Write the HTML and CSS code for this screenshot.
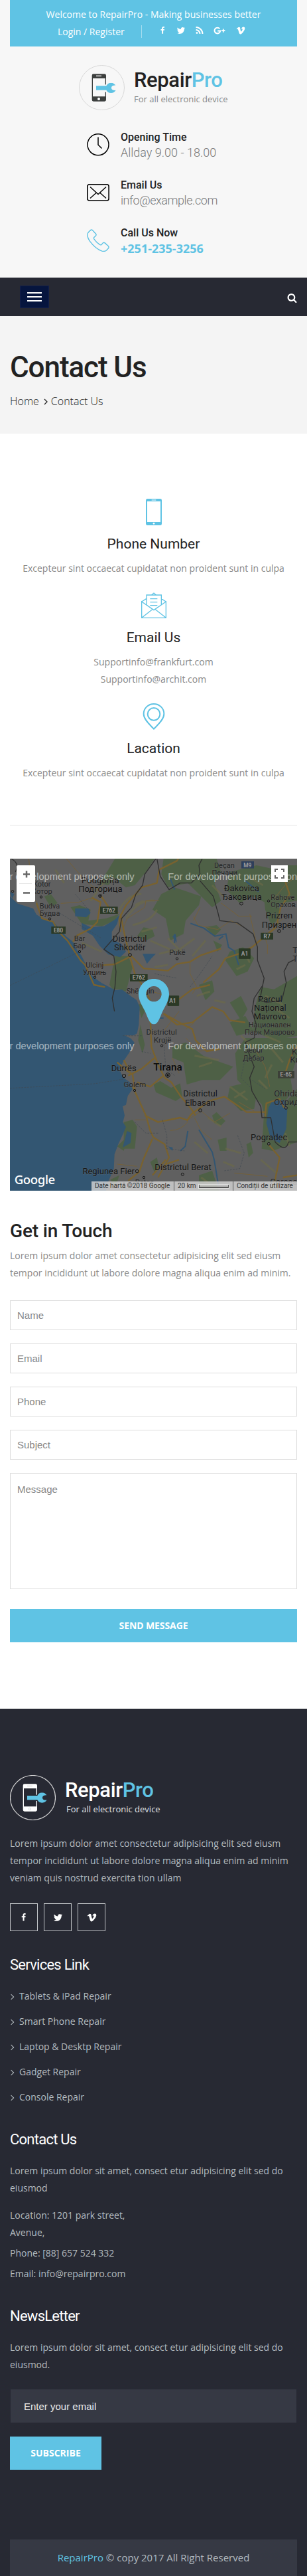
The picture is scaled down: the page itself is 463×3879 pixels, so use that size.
FILE: index.html
```html
<!DOCTYPE html>
<html lang="en">
<head>
<meta charset="utf-8">
<title>RepairPro - Contact Us</title>
<link rel="stylesheet" href="styles.css">
</head>
<body>
<svg class="defs" width="0" height="0" aria-hidden="true">
  <symbol id="fb" viewBox="0 0 1792 1792"><path transform="translate(200 0)" d="M959 140v218h-130q-71 0-96 30t-25 90v156h243l-32 245h-211v629h-254v-629h-212v-245h212v-181q0-155 86-240t231-85q122 0 188 12z"/></symbol>
  <symbol id="tw" viewBox="0 0 1792 1792"><path d="M1684 408q-67 98-162 167 1 14 1 42 0 130-38 259.500t-115.500 248.500-184.500 210.500-258 146-323 54.500q-271 0-496-145 35 4 78 4 225 0 401-138-105-2-188-64.500t-114-159.500q33 5 61 5 43 0 85-11-112-23-185.500-111.500t-73.500-205.500v-4q68 38 146 41-66-44-105-115t-39-154q0-88 44-163 121 149 294.500 238.500t371.500 99.500q-8-38-8-74 0-134 94.500-228.500t228.500-94.500q140 0 236 102 109-21 205-78-37 115-142 178 93-10 186-50z"/></symbol>
  <symbol id="rss" viewBox="0 0 1792 1792"><path d="M576 1344q0 80-56 136t-136 56-136-56-56-136 56-136 136-56 136 56 56 136zm512 123q2 28-17 48-18 21-47 21h-135q-25 0-43-16.500t-20-41.500q-22-229-184.500-391.500t-391.500-184.500q-25-2-41.500-20t-16.500-43v-135q0-29 21-47 17-17 43-17h5q160 13 306 80.500t259 181.500q114 113 181.500 259t80.500 306zm512 2q2 27-18 47-18 20-46 20h-143q-26 0-44.500-17.500t-19.500-42.500q-12-215-101-408.500t-231.500-336-336-231.500-408.500-102q-25-1-42.500-19.500t-17.500-43.500v-143q0-28 20-46 18-18 44-18h3q262 13 501.500 120t425.500 294q187 186 294 425.500t120 501.500z"/></symbol>
  <symbol id="gp" viewBox="0 0 18 14"><path d="M9.300 4.300A4.350 4.350 0 1 0 10.200 7.600H6.200" fill="none" stroke="currentColor" stroke-width="2"/><path d="M13.900 4.600h1.700v1.700h1.800V8h-1.800v1.800h-1.700V8h-1.800V6.300h1.800z"/></symbol>
  <symbol id="vm" viewBox="0 0 1792 1792"><path d="M1709 518q-10 236-332 651-333 431-562 431-142 0-240-263-44-160-132-482-72-262-157-262-18 0-127 76l-77-98q24-21 108-96.500t130-115.500q156-138 241-146 95-9 153 55.500t81 203.500q44 287 66 373 55 249 120 249 51 0 154-161 101-161 109-246 13-139-109-139-57 0-121 26 120-393 459-382 251 8 236 326z"/></symbol>
  <symbol id="search" viewBox="0 0 1792 1792"><path d="M1216 832q0-185-131.500-316.500t-316.500-131.500-316.500 131.500-131.500 316.500 131.500 316.500 316.500 131.500 316.500-131.500 131.500-316.500zm512 832q0 52-38 90t-90 38q-54 0-90-38l-343-342q-179 124-399 124-143 0-273.500-55.500t-225-150-150-225-55.500-273.500 55.500-273.500 150-225 225-150 273.500-55.500 273.500 55.500 225 150 150 225 55.500 273.500q0 220-124 399l343 343q37 37 37 90z"/></symbol>
  <symbol id="wrench" viewBox="0 0 90 48"><path d="M0 14h46C50 5 57 0 67 0c10 0 18 5 21 12-4-1-10 0-14 2-4 3-5 6-5 9s1 6 5 9c5 2 11 2 15 1-4 8-12 13-22 13s-17-5-21-13H0z"/></symbol>
</svg>

<header class="header">
  <div class="topbar">
    <p class="welcome">Welcome to RepairPro - Making businesses better</p>
    <div class="topbar-row">
      <a class="login">Login / Register</a>
      <nav class="top-social">
        <svg class="t-fb"><use href="#fb"/></svg>
        <svg><use href="#tw"/></svg>
        <svg><use href="#rss"/></svg>
        <svg class="t-gp"><use href="#gp"/></svg>
        <svg><use href="#vm"/></svg>
      </nav>
    </div>
  </div>
  <a class="logo">
    <svg class="logo-mark" viewBox="0 0 207 204">
      <ellipse cx="103.500" cy="102" rx="102" ry="100.500" fill="none" stroke="#d8d8d8" stroke-width="3"/>
      <path fill="#3c3f3e" fill-rule="evenodd" d="M66 40h50q7 0 7 7v110q0 7-7 7H66q-7 0-7-7V47q0-7 7-7zM63 60v82h56V60z"/>
      <path d="M78 49h24" stroke="#fff" stroke-width="4"/><circle cx="90" cy="153" r="6" fill="#fff"/>
      <path d="M76 88h50v34H76z" fill="#f7f7f7"/>
      <use href="#wrench" x="78" y="80" width="90" height="48" fill="#5fc3e4"/>
    </svg>
    <span class="logo-text"><span class="brand">Repair<em>Pro</em></span><span class="tagline">For all electronic device</span></span>
  </a>
  <ul class="info">
    <li><svg viewBox="0 0 34 34"><circle cx="17" cy="16.800" r="16" fill="none" stroke="#000" stroke-width="1.500"/><path d="M17 5.500v11.500l5.500 5.500" fill="none" stroke="#000" stroke-width="1.500"/></svg>
      <div><h3>Opening Time</h3><p>Allday 9.00 - 18.00</p></div></li>
    <li><svg viewBox="0 0 34 34"><rect x=".9" y="4.800" width="32.200" height="24.200" rx="3" fill="none" stroke="#000" stroke-width="1.600"/><path d="M5 8.500 17 19.500 29 8.500M5 25.500l9-8M29 25.500l-9-8" fill="none" stroke="#000" stroke-width="1.400"/></svg>
      <div><h3>Email Us</h3><p class="mail">info@example.com</p></div></li>
    <li><svg viewBox="0 0 34 34"><path d="M2.500 4.500 5.800 1.400q1.300-1 2.600.2l5.200 5.600q1 1.400-.2 2.800l-2.600 2.500q-.8 1 0 2.300 3.800 5.600 8.600 8.600 1.500.8 2.600 0l2.200-2.500q1.500-1.200 3 0l5.100 4.700q1.400 1.500.2 3.200l-3 3.200q-2.600 2.100-6.600 1.100Q13.500 30.200 4.600 18.400 1 13.100.8 8.900.7 6.600 2.500 4.500z" fill="none" stroke="#5fc3e4" stroke-width="1.400"/></svg>
      <div><h3>Call Us Now</h3><p class="tel">+251-235-3256</p></div></li>
  </ul>
</header>

<nav class="navbar">
  <button class="toggle" aria-label="Menu"><i></i><i></i><i></i></button>
  <svg class="search"><use href="#search"/></svg>
</nav>

<section class="title-band">
  <h1>Contact Us</h1>
  <p class="crumbs"><a>Home</a><svg viewBox="0 0 6 10"><path d="m1 1 4 4-4 4" fill="none" stroke="#222" stroke-width="1.300"/></svg><span>Contact Us</span></p>
</section>

<main class="main">
  <section class="contacts">
    <article>
      <svg viewBox="0 0 114 120"><path fill="#5fc3e4" fill-rule="evenodd" d="M28 0h58q7 0 7 7v106q0 7-7 7H28q-7 0-7-7V7q0-7 7-7zm-1 12v93h60V12z"/><path d="M47 6h20" stroke="#fff" stroke-width="3"/><circle cx="57" cy="112" r="4" fill="#fff"/></svg>
      <h3>Phone Number</h3>
      <p>Excepteur sint occaecat cupidatat non proident sunt in culpa</p>
    </article>
    <article>
      <svg viewBox="0 0 114 120"><g fill="none" stroke="#5fc3e4" stroke-width="4"><path d="M2 42v73h110V42L57 80zM2 115l50-39M112 115 62 76M2 42l22-14M112 42 90 28M24 56V12h67v44M47 11l10-8 10 8M40 29h33M40 44h33M40 59h33"/></g></svg>
      <h3>Email Us</h3>
      <p>Supportinfo@frankfurt.com<br>Supportinfo@archit.com</p>
    </article>
    <article>
      <svg viewBox="0 0 114 120"><g fill="none" stroke="#5fc3e4" stroke-width="6"><path d="M57 116C43 101 11 75 11 48 11 21 33 3 57 3s46 18 46 45c0 27-32 53-46 68z"/><circle cx="57" cy="49" r="28"/></g></svg>
      <h3>Lacation</h3>
      <p>Excepteur sint occaecat cupidatat non proident sunt in culpa</p>
    </article>
  </section>

  <section class="map">
    <svg class="map-art" viewBox="45 0 1299 1500" preserveAspectRatio="none">
      <rect x="45" width="1299" height="1500" fill="#606060"/>
      <g class="green">
        <path d="M520 0h180l-40 60-50 60-40 10-50-40-30 30-40-10 40-60zM740 0h240l20 60-30 50 30 80-40 30-60-60-50-50-90 20-30-60zM730 160l60-30 60 20 60 20-10 40-60 70-10 60-60 30-20-100-60-40zM1040 60l120-30 184 40v120l-120 20-80-40-60 30-60-60zM1250 30h94v120l-60 20z"/>
        <path d="M930 310l50-10 20 20-30 30zM620 350l30-40 40 10 10 30-40 20zM320 220l40-10 50 20-10 50 80-10 60-20-20 30-60 25-90-10zM200 170l30-10 30 40-30 20zM1040 420l60-20 50 50-30 60-50 20-50-70zM1190 130l60 30 20 90-40 60-30-80zM965 370l40 20-20 30z"/>
        <path d="M520 440h60l20 50-30 110-30-10-30 0-15-20zM900 570l60-20 10 50-40 40zM1180 580l60 10 104-60v270l-100 20-100-40 10-110zM1040 650l50-30 30 60-30 50zM1040 740l70-30 40 70-80 20zM625 660l25-10 10 30-20 40z"/>
        <path d="M1110 810h234v90l-30 90 10 60-60 80-60 60-20-80-60-60-50-50-10-120zM780 850l60-20 80 60 50 20 85 30-60 60-80 0-70 20-15-100-50-20zM1310 1080l34-40v240l-110 40-50-10 10-150 60-10zM695 1020l30-15 50 30 40-20 10 60-30 20-90-40zM1040 1030l80-20 40 60-10 60-60 10-60-60zM960 1160l20-15 40 40-20 20-30-10zM985 1270l40-10v60l-30 0zM1115 1290l20-10 10 50-20 20zM560 1190l40-10 20 30-10 100h-50zM530 1300l50-50-20 70zM680 1370l30-20 10 50-20 20zM900 1430l60-20 30 90h-90zM635 750l20 90-10 40-20-60zM500 1450l40-20-20 60z"/>
      </g>
      <g class="olive">
        <path d="M540 230q40-70 100-70M570 270q60-90 130-80M610 210l40-20M600 300q90-20 110-70M640 330l70-20M680 370l90 40M760 360l60 60M720 430l80-20M800 420l80-60M870 440l60-70M410 190l30-40M430 150l60-60M250 50l40 60M370 380l90 40M700 490l60-10M960 120l50 50M1120 80l70 40M890 620l60-20M970 640l50 10M1070 500l40-20M1110 430l20 40"/>
        <path d="M880 890l110 20M900 940l60-20M1040 1030l80 60M1060 1080l50-30M1090 800l60 60M1200 800l70 30M1230 860l50 60M1230 930l-30 60M1290 1240l20 60M940 1170l60 40M910 1440l40 30M1020 1310l70 20M1010 1370l50 20M880 1280l60 50M1170 1000l40 40M1180 1360l70 60M1250 680l60 40M1200 620l80 40"/>
      </g>
      <path class="sea" d="M45 170 80 203 150 225 165 253 215 283 242 285 270 318 300 352 330 376 350 415 368 437 388 476 398 510 430 540 460 562 500 583 522 594 552 591 592 621 618 638 632 670 628 750 620 790 605 798 562 797 592 812 608 830 585 876 562 910 540 952 556 988 590 1012 600 1040 578 1072 570 1112 555 1118 564 1160 556 1190 570 1212 553 1252 535 1290 518 1336 515 1400 498 1440 484 1471 480 1500H45z"/>
      <g class="sea"><path d="M370 290l40 20 60-5 50-30 20-20-10 40-24 35 0 35 44 20 20 35-26 25-54-12-40-40-30-45-50-30zM1235 1090l50 0 15 40-5 90-30 65-40-20-20-70 10-70zM575 1230l20 10-5 45-35 20zM340 225l60 0 10 20-20 20-50-5zM780 350l15-10 5 40zM645 430l60 0-20 20-20 25zM760 1300l22 5-2 15zM45 150l20 10-10 20z"/></g>
      <g class="river"><path d="M862 292l60 22 50 36 50-10 12 60 30 20M790 340v40M1010 350l-20 15M850 1230l-12 70-22 20M900 1225l60 100 10 40 18 110M770 90l20 50M690 720l50 0M1110 100l60 50M1060 420l20 60"/></g>
      <g class="road-thin">
        <path d="M130 0l10 90-30 50 60 60M300 0l60 70 50 50 50 30M275 202l80-5 60-20M555 320l20-50 80-50 5-30 60 0M875 260l20 40 90 20 60-40 60 30M905 220l-30 60M1000 200l80 60 60 0M1190 330l20 60 0 40M1240 180l50-60 50-40M860 460l0 60 30 60-20 30M690 600l60 20M1130 250l30 130 70-60 50-50"/>
        <path d="M850 1180l60-40 60 50 70-40M530 1380l90 10M610 1180l50 0M880 1170l30 60 50 40M1080 1100l70 40M1060 1420l150 15M1160 870l40 70 20 90M780 900l30 70M840 810l60 60 90-10M840 770l40-30M770 1228q50 0 80-40M740 780l70-90"/>
      </g>
      <g class="road">
        <path d="M165 200l25 70 50 15 25 45 40 40 60 90 20 20 40 90 50 10M330 376l20-30 60-30 30-30 15-90-40-20M455 165l40 60 40 20M545 330l-5-60 30-60 70-80 70-20 10-60 80-40 20-30M545 250l20 100 20 80M590 436l60 60 110 10 40-30 60-10 50-30 90-30M590 450l20 70 40 60 30 60M460 482l60-5 70-35M920 560l70-60 30-50 60-20 60-30 60-50 50-40 20-90 40-60-20-60-20-30M810 635l60-45 80-20M740 700l60 50 70-10 90-70 50 20 30 40 70 10"/>
        <path d="M740 700l90 50 40 20 15 50 50 50 60-10M680 720l5 130 30 80 30 60 30 20 40 60 50 60 20 30M530 920l40 35 30 20 10 70M560 910l30 60M580 980l60-30 60-50M620 1010l60 20 60-50M600 1030l60 130 20 70 15 30 50 30 20 60-50 90M655 1160l60 30 100-20 30 10M845 1185l20-30 80-60 70-20 60 40 40 30 90 0M1200 1165l5-60 60-20 20 40M1290 970l20-60 30-60M1215 1290l50 60-20 100-20 50M690 1265l-40 90-20 60-50 40M750 1380l60-20M1280 1440l64-10M690 1430l60-70"/>
      </g>
      <g class="dash"><path d="M45 573 370 415M45 1037l380-20 140-22M555 800l90 0M740 810l10 140 40 30M610 1190l50 50 60 0M735 1180l20 70 0 60 80 10M1075 1250l30 80-20 70-70 10M1140 1000l60 40M1110 900l-20 90 50 50M860 580l60-80 40-60M260 240l100 60 100 60M340 160l60 70M640 870l40 10M700 520l100 20"/></g>
      <g class="border"><path d="M50 0q40 20 20 60M705 0l-50 70-10 50-30 40-20 60-45 50-10 60-70 80 45 30 10 70-5 70-12 50 10 60M710 0l15 80 40 60 50-30 50 0 40-40-5-40 15-30M905 100l60 70 20 70 10 40 80 10 70 50 20 60 0 60 30 80-20 100 30 10 70-10 20-80-10-50 20-40 30-15M1190 570l-40 60-10 60 20 60-10 60-40 20 20 60 20 50-20 50 10 60 40 70 5 50h40l20 110q50 50 60 0l40 0"/></g>
      <g class="shield"><path d="M453 217h80v32h-80zM232 307h65v32h-65zM588 522h80v32h-80zM1180 335h56v30h-56z"/><path class="blue" d="M1092 12h57v32h-57z"/><path class="blue-g" d="M1082 407h50v44h-50zM759 620h50v44h-50z"/><path class="grey" d="M1257 960h75v32h-75z"/></g>
      <g class="shield-t"><text x="493" y="242">E762</text><text x="264" y="332">E80</text><text x="628" y="547">E762</text><text x="1208" y="360">R7</text><text x="1120" y="38">M9</text><text x="1107" y="439">A1</text><text x="781" y="652">A1</text><text x="1294" y="984">E-65</text></g>
      <g class="dots"><circle cx="453" cy="168" r="7"/><circle cx="1092" cy="203" r="7"/><circle cx="1215" cy="191" r="5"/><circle cx="225" cy="272" r="5"/><circle cx="1263" cy="327" r="7"/><circle cx="360" cy="420" r="5"/><circle cx="588" cy="435" r="7"/><circle cx="801" cy="452" r="5"/><circle cx="429" cy="536" r="5"/><circle cx="186" cy="173" r="5"/><circle cx="57" cy="148" r="5"/><circle cx="732" cy="845" r="5"/><circle cx="561" cy="981" r="8"/><circle cx="759" cy="978" r="10"/><circle cx="609" cy="1047" r="5"/><circle cx="906" cy="1137" r="7"/><circle cx="1294" cy="1126" r="6"/><circle cx="1216" cy="1288" r="6"/><circle cx="620" cy="1412" r="7"/><circle cx="826" cy="1426" r="6"/><circle cx="651" cy="1440" r="5"/></g>
      <circle cx="759" cy="978" r="5"/><circle cx="453" cy="168" r="3"/>
      <g class="place big">
        <text x="454" y="112">Podgorița</text><text x="454" y="151">Подгорица</text><text x="1093" y="146">Đakovica</text><text x="1093" y="185">Ђаковица</text><text x="1263" y="269">Prizren</text><text x="1263" y="311">Призрен</text><text x="587" y="376">Districtul</text><text x="587" y="415">Shkodër</text><text x="560" y="961">Durrës</text><text x="906" y="1075">Districtul</text><text x="906" y="1117">Elbasan</text><text x="491" y="1425">Regiunea Fier</text><text x="828" y="1408">Districtul Berat</text><text x="1217" y="1271">Pogradec</text><text x="1222" y="649">Parcul</text><text x="1222" y="688">Național</text><text x="1222" y="727">Mavrovo</text>
      </g>
      <text class="place tirana" x="759" y="956">Tirana</text>
      <g class="place">
        <text x="1015" y="41">Deçan</text><text x="1016" y="74">Печани</text><text x="190" y="125">Kotor</text><text x="190" y="158">Котор</text><text x="225" y="225">Budva</text><text x="225" y="258">Будва</text><text x="360" y="371">Bar</text><text x="360" y="404">Бар</text><text x="428" y="491">Ulcinj</text><text x="428" y="524">Улцињ</text><text x="802" y="436">Pukë</text><text x="635" y="608">Shëngjin</text><text x="731" y="794" class="md">Districtul</text><text x="735" y="830" class="md">Krujë</text><text x="1220" y="761">Национален</text><text x="1220" y="794">Парк Маврово</text><text x="1147" y="875">Debar</text><text x="1147" y="911">Дебар</text><text x="610" y="1033" class="md">Golem</text><text x="654" y="1474">Patos</text>
      </g>
      <g class="place left"><text x="1225" y="186">Rahove</text><text x="1225" y="220">Орахов</text><text x="1240" y="1074" class="lg">Ohrida</text><text x="1240" y="1112" class="lg">Охрид</text><text x="1320" y="884" class="lg">K</text><text x="1312" y="922" class="lg">Ки</text><text x="1324" y="426" class="lg">T</text><text x="1324" y="465" class="lg">Т</text><text x="1222" y="1474" class="lg">Corcea</text></g>
      <g class="notice"><text x="-8" y="95">For development purposes only</text><text x="760" y="95">For development purposes only</text><text x="-8" y="862">For development purposes only</text><text x="760" y="862">For development purposes only</text></g>
      <path fill="#5fc3e4" fill-rule="evenodd" d="M696 543c38 0 69 30 69 68 0 28-14 48-28 76-13 26-20 61-41 61s-28-35-41-61c-14-28-28-48-28-76 0-38 31-68 69-68zm0 33a35 35 0 1 0 0 70 35 35 0 0 0 0-70z"/>
      <text class="google" x="65" y="1471" textLength="185">Google</text>
    </svg>
    <div class="zoomer"><svg viewBox="0 0 28 55"><path d="M10 13.500h10M15 8.500v10M10 41.500h10" stroke="#666" stroke-width="2.500"/><path d="M4 27.500h19" stroke="#e6e6e6"/></svg></div>
    <div class="full"><svg viewBox="0 0 25 25"><path d="M6 10V6h4M15 6h4v4M19 15v4h-4M10 19H6v-4" fill="none" stroke="#666" stroke-width="2"/></svg></div>
    <div class="attrib"><span class="a1">Date hartă ©2018 Google</span><span class="a2">20 km<i></i></span><span class="a3">Condiții de utilizare</span></div>
  </section>

  <section class="touch">
    <h2>Get in Touch</h2>
    <p>Lorem ipsum dolor amet consectetur adipisicing elit sed eiusm tempor incididunt ut labore dolore magna aliqua enim ad minim.</p>
    <form class="form">
      <input placeholder="Name"><input placeholder="Email"><input placeholder="Phone"><input placeholder="Subject">
      <textarea placeholder="Message"></textarea>
      <button type="button" class="btn send">SEND MESSAGE</button>
    </form>
  </section>
</main>

<footer class="footer">
  <a class="logo logo-light">
    <svg class="logo-mark" viewBox="0 0 207 204">
      <ellipse cx="103.500" cy="102" rx="102" ry="100.500" fill="none" stroke="#d8d8d8" stroke-width="3.500"/>
      <path fill="#fff" fill-rule="evenodd" d="M66 40h50q7 0 7 7v110q0 7-7 7H66q-7 0-7-7V47q0-7 7-7zM63 60v82h56V60z"/>
      <path d="M78 49h24" stroke="#ccc" stroke-width="3"/><circle cx="90" cy="153" r="5" fill="none" stroke="#ccc" stroke-width="2"/>
      <path d="M76 89h50v28H76z" fill="#272933"/>
      <use href="#wrench" x="78" y="79" width="90" height="48" fill="#5fc3e4"/>
    </svg>
    <span class="logo-text"><span class="brand">Repair<em>Pro</em></span><span class="tagline">For all electronic device</span></span>
  </a>
  <p class="about">Lorem ipsum dolor amet consectetur adipisicing elit sed eiusm tempor incididunt ut labore dolore magna aliqua enim ad minim veniam quis nostrud exercita tion ullam</p>
  <div class="social">
    <a><svg><use href="#fb"/></svg></a><a><svg><use href="#tw"/></svg></a><a><svg><use href="#vm"/></svg></a>
  </div>
  <h3>Services Link</h3>
  <ul class="links">
    <li>Tablets &amp; iPad Repair</li><li>Smart Phone Repair</li><li>Laptop &amp; Desktp Repair</li><li>Gadget Repair</li><li>Console Repair</li>
  </ul>
  <h3>Contact Us</h3>
  <p>Lorem ipsum dolor sit amet, consect etur adipisicing elit sed do eiusmod</p>
  <address class="address"><span>Location: 1201 park street,<br>Avenue,</span><span>Phone: [88] 657 524 332</span><span>Email: info@repairpro.com</span></address>
  <h3>NewsLetter</h3>
  <p>Lorem ipsum dolor sit amet, consect etur adipisicing elit sed do eiusmod.</p>
  <form class="subscribe"><input placeholder="Enter your email"><button type="button" class="btn">SUBSCRIBE</button></form>
  <p class="copyright"><a>RepairPro</a> © copy 2017 All Right Reserved</p>
</footer>
</body>
</html>
```
FILE: styles.css
```css
* { box-sizing: border-box; margin: 0; padding: 0; }
body { background: #fff; color: #888; font: 14px/26px "Open Sans", sans-serif; }
ul { list-style: none; }
svg { display: block; fill: currentColor; flex: none; }
.defs { position: absolute; }
h1, h2, h3 { font-family: Roboto, sans-serif; font-weight: 500; color: #222; }

.header { background: #f7f7f7; height: 418px; padding: 0 15px; }
.topbar { background: #5fc3e4; color: #fff; height: 70px; padding-top: 9px; text-align: center; }
.topbar-row { display: flex; padding-left: 72px; }
.login { width: 127px; text-align: left; border-right: 1px solid #a5dcef; height: 19px; line-height: 20px; margin-top: 3px; }
.top-social { display: flex; align-items: center; gap: 14px; padding-left: 25px; }
.top-social svg { width: 14px; height: 14px; }
.top-social .t-fb { margin-right: -1px; }
.top-social .t-gp { width: 18px; margin-right: 2px; }

.logo { display: flex; justify-content: flex-start; gap: 15px; padding-left: 104px; margin-top: 28px; height: 68px; }
.logo-mark { width: 69px; height: 68px; }
.logo-text { display: flex; flex-direction: column; padding-top: 5px; }
.brand { font: 500 31px/36px Roboto, sans-serif; letter-spacing: -.4px; color: #222; white-space: nowrap; margin-left: -1px; }
.brand em { font-style: normal; color: #5fc3e4; }
.tagline { font-size: 13px; line-height: 18px; margin: 1px 0 0 -1px; }

.info { display: flex; flex-direction: column; gap: 26px; padding: 30px 0 0 116px; }
.info li { display: flex; gap: 17px; height: 46px; }
.info svg { width: 34px; height: 34px; margin-top: 5px; }
.info h3 { font-size: 16px; line-height: 22px; }
.info p { font: 300 18px/24px Roboto, sans-serif; color: #777; }
.info .mail { letter-spacing: -.45px; }
.info .tel { font: 700 18px/24px "Open Sans", sans-serif; color: #5fc3e4; }

.navbar { background: #272933; height: 58px; display: flex; justify-content: space-between; padding: 12px 15px 0 30px; }
.toggle { width: 44px; height: 34px; background: #06153e; border: 1px solid #14204a; display: flex; flex-direction: column; gap: 4px; padding: 9px 10px; }
.toggle i { height: 2px; background: #fff; }
.search { width: 15px; height: 15px; margin-top: 11px; color: #fff; }

.title-band { background: #f4f4f4; height: 177px; padding: 50px 15px 0; }
.title-band h1 { font-size: 44px; line-height: 54px; letter-spacing: -1.1px; }
.crumbs { display: flex; align-items: center; margin-top: 11px; font-size: 16px; font-weight: 300; color: #222; }
.crumbs svg { width: 6px; height: 10px; margin: 2px 5px 0 7px; }

.main { padding: 0 15px 100px; }
.contacts { padding: 98px 0 65px; border-bottom: 1px solid #e5e5e5; text-align: center; }
.contacts article { padding-bottom: 23px; }
.contacts article:last-child { padding-bottom: 0; }
.contacts svg { width: 38px; height: 40px; margin: 0 auto 14px; }
.contacts h3 { font-size: 21px; line-height: 28px; font-weight: 400; }
.contacts p { margin-top: 10px; }

.map { position: relative; height: 500px; margin-top: 50px; overflow: hidden; }
.map-art { width: 433px; height: 500px; fill: #111; }
.green { fill: #4c6142; opacity: .85; }
.olive { fill: none; stroke: #6d6b48; stroke-width: 9; opacity: .6; }
.sea { fill: #335672; }
.river { fill: none; stroke: #335672; stroke-width: 6; }
.road { fill: none; stroke: #79622f; stroke-width: 7; stroke-linejoin: round; }
.road-thin { fill: none; stroke: #74603a; stroke-width: 3; }
.dash { fill: none; stroke: #3f4952; stroke-width: 2; stroke-dasharray: 8 5; }
.border { fill: none; stroke: #303030; stroke-width: 4; stroke-linejoin: round; }
.shield { fill: #2b3926; }
.shield .blue { fill: #2e3f5b; }
.shield .blue-g { stroke: #2b3926; stroke-width: 3; }
.shield .grey { fill: #3c4038; }
.shield-t { font: 700 25px Roboto, sans-serif; fill: #9b9b9b; text-anchor: middle; }
.dots { fill: #606060; stroke: #151515; stroke-width: 3; }
.place { font: 400 33px Roboto, sans-serif; fill: #262626; text-anchor: middle; stroke: #6a6a6a; stroke-width: 3; stroke-opacity: .5; paint-order: stroke; }
.big, .lg { font-size: 39px; }
.md { font-size: 35px; }
.big { fill: #161616; }
.tirana { font-size: 46px; font-weight: 500; fill: #0b0b0b; }
.left { text-anchor: start; }
.notice { font: 44px "Liberation Sans", sans-serif; fill: #fff; opacity: .55; }
.google { font: 500 56px "Noto Sans", sans-serif; fill: #fff; }
.zoomer, .full { position: absolute; top: 10px; background: #fff; }
.zoomer { left: 10px; width: 28px; height: 55px; border-radius: 2px; }
.full { right: 14px; width: 25px; height: 25px; }
.attrib { position: absolute; right: 0; bottom: 0; display: flex; height: 14px; font: 10px/14px Roboto, sans-serif; color: #333; }
.attrib span { background: rgba(215, 215, 215, .8); padding-left: 5px; white-space: nowrap; border-left: 1px solid #555; }
.attrib .a1 { width: 124px; border: 0; }
.attrib .a2 { width: 89px; display: flex; gap: 4px; }
.attrib .a2 i { width: 45px; height: 5px; margin-top: 5px; border: solid #555; border-width: 0 1px 2px; outline: 1px solid rgba(255, 255, 255, .5); }
.attrib .a3 { width: 97px; }

.touch { padding-top: 44px; }
.touch h2 { font-size: 28px; line-height: 34px; margin-bottom: 7px; letter-spacing: -.15px; }
.form { display: flex; flex-direction: column; gap: 20px; margin-top: 28px; }
.form input, .form textarea { border: 1px solid #ddd; height: 45px; padding: 0 10px; font: 15px "Liberation Sans", sans-serif; background: #fff; width: 100%; border-radius: 0; }
.form textarea { height: 175px; padding-top: 15px; resize: none; display: block; }
::placeholder { color: #888; opacity: 1; }
.btn { background: #5fc3e4; color: #fff; border: 0; height: 50px; font: 700 14px/50px "Open Sans", sans-serif; }
.send { margin-top: 10px; letter-spacing: -.1px; }

.footer { background: #272933; color: #b4bcc0; padding: 72px 15px 0; height: 1306px; }
.footer .logo { padding-left: 0; }
.logo-light .brand, .logo-light .tagline { color: #fff; }
.logo-light .tagline { padding-left: 2px; color: #e0e2e4; }
.about { margin-top: 22px; }
.social { display: flex; gap: 9px; margin-top: 25px; color: #fff; }
.social a { width: 42px; height: 42px; border: 1px solid #c3c6c9; display: flex; align-items: center; justify-content: center; }
.social svg { width: 15px; height: 15px; }
.footer h3 { color: #fff; font-size: 22px; line-height: 28px; font-weight: 400; letter-spacing: -.75px; margin: 37px 0 20px; }
.links { display: flex; flex-direction: column; gap: 12px; }
.links li { display: flex; align-items: center; gap: 9px; }
.links li::before { content: ""; width: 5px; height: 5px; border: solid #b4bcc0; border-width: 1.500px 1.500px 0 0; transform: translate(-1px, 1px) rotate(45deg); margin-right: -1px; }
.address { display: flex; flex-direction: column; gap: 5px; margin-top: 15px; font-style: normal; }
.subscribe { display: flex; flex-direction: column; align-items: flex-start; gap: 21px; margin-top: 24px; }
.subscribe input { width: 431px; height: 50px; margin-left: 1px; border: 0; background: #363944; padding: 0 20px; font: 15px "Liberation Sans", sans-serif; }
.subscribe input::placeholder { color: #e8e8e8; }
.subscribe .btn { width: 138px; }
.copyright { background: #363944; height: 55px; margin-top: 105px; padding-top: 14px; text-align: center; font-size: 15px; }
.copyright a { color: #5fc3e4; }
```
